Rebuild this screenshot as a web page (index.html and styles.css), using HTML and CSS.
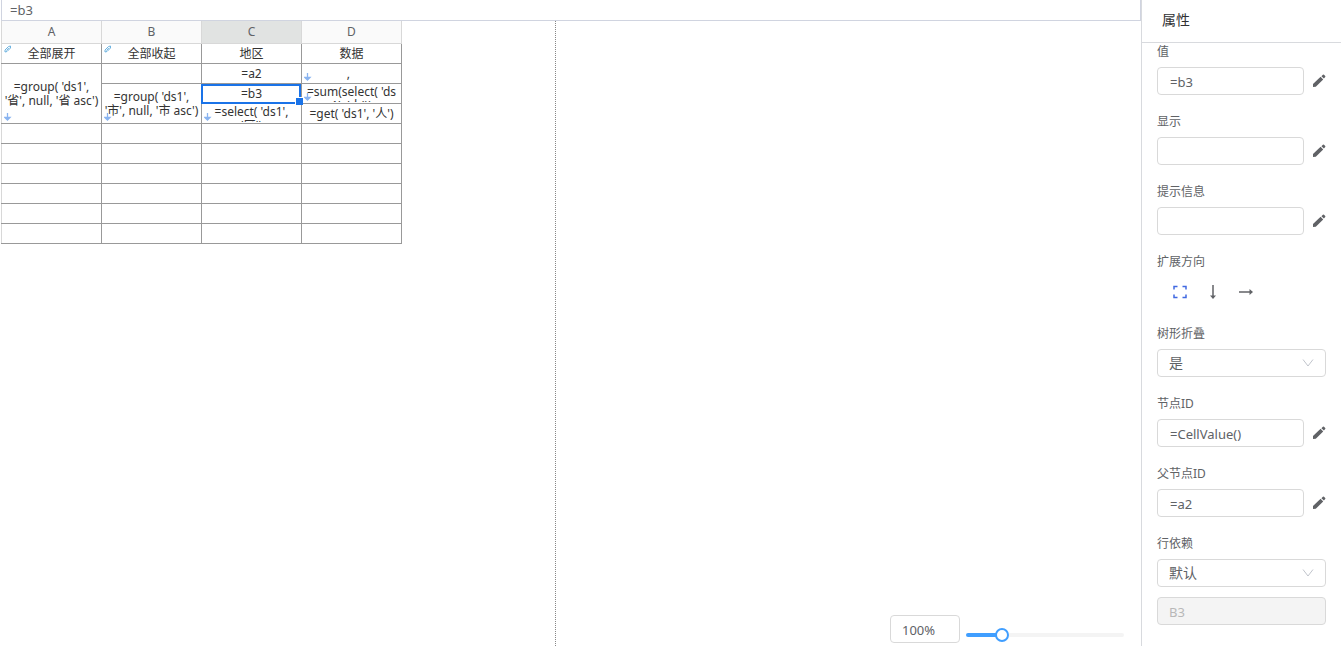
FILE: index.html
```html
<!DOCTYPE html>
<html lang="zh-CN">
<head>
  <meta charset="UTF-8">
  <meta name="viewport" content="width=device-width, initial-scale=1.0">
  <title>报表设计</title>
  <link rel="stylesheet" href="styles.css">
</head>
<body>
  <!-- shared icons -->
  <svg class="sprite" aria-hidden="true">
    <symbol id="pencil" viewBox="0 0 14 14">
      <path d="M1 10 8.600 2.800 11.200 5.400 3.800 12.800 1 13z M9.400 2.200 10.900.8a.8.8 0 0 1 1.100 0l1.200 1.200a.8.8 0 0 1 0 1.100L11.900 4.600z"/>
    </symbol>
    <symbol id="chevron" viewBox="0 0 12 8">
      <path d="M1 .5 6 7 11 .5" fill="none" stroke="currentColor"/>
    </symbol>
    <symbol id="arrow" viewBox="0 0 8 8">
      <path d="M3.500 0v6M1 4.500h5L3.500 7z" fill="currentColor" stroke="currentColor" stroke-width="1.300"/>
    </symbol>
    <symbol id="clip" viewBox="0 0 8 8">
      <path d="M1 5 4.500 1.500 6.500 1 6.500 3 3 6.500 1 7z M2.500 5.500 5 2.800" fill="none" stroke="currentColor"/>
    </symbol>
  </svg>

  <main class="designer">
    <input class="formula" type="text" value="=b3" aria-label="公式">
    <div class="canvas">
      <div class="paper">
        <table class="sheet">
          <thead>
            <tr><th>A</th><th>B</th><th class="active">C</th><th>D</th></tr>
          </thead>
          <tbody>
            <tr>
              <td class="edge"><svg class="mark-top"><use href="#clip"/></svg><div class="cell">全部展开</div></td>
              <td><svg class="mark-top"><use href="#clip"/></svg><div class="cell">全部收起</div></td>
              <td><div class="cell">地区</div></td>
              <td><div class="cell">数据</div></td>
            </tr>
            <tr>
              <td class="edge merged" rowspan="3">=group( 'ds1',<br>'省', null, '省 asc')<svg class="mark"><use href="#arrow"/></svg></td>
              <td></td>
              <td><div class="cell">=a2</div></td>
              <td><div class="cell">,&nbsp;&nbsp;</div><svg class="mark"><use href="#arrow"/></svg></td>
            </tr>
            <tr>
              <td class="merged" rowspan="2">=group( 'ds1',<br>'市', null, '市 asc')<svg class="mark"><use href="#arrow"/></svg></td>
              <td class="selected"><div class="cell">=b3</div></td>
              <td><div class="cell wrap">=sum(select( 'ds<br>1', '人'))</div><svg class="mark"><use href="#arrow"/></svg></td>
            </tr>
            <tr>
              <td><div class="cell wrap">=select( 'ds1',<br>'区')</div><svg class="mark"><use href="#arrow"/></svg></td>
              <td><div class="cell">=get( 'ds1', '人')</div></td>
            </tr>
            <tr><td class="edge"></td><td></td><td></td><td></td></tr>
            <tr><td class="edge"></td><td></td><td></td><td></td></tr>
            <tr><td class="edge"></td><td></td><td></td><td></td></tr>
            <tr><td class="edge"></td><td></td><td></td><td></td></tr>
            <tr><td class="edge"></td><td></td><td></td><td></td></tr>
            <tr><td class="edge"></td><td></td><td></td><td></td></tr>
          </tbody>
        </table>
      </div>
      <div class="zoom">
        <input class="box" type="text" value="100%" aria-label="缩放比例">
        <input class="slider" type="range" min="0" max="100" value="20" aria-label="缩放">
      </div>
    </div>
  </main>

  <aside class="panel">
    <h2>属性</h2>
    <form class="props">
      <div class="field">
        <label for="value">值</label>
        <div class="row">
          <input class="box" id="value" type="text" value="=b3">
          <button type="button" class="edit" aria-label="编辑值"><svg><use href="#pencil"/></svg></button>
        </div>
      </div>
      <div class="field">
        <label for="display">显示</label>
        <div class="row">
          <input class="box" id="display" type="text">
          <button type="button" class="edit" aria-label="编辑显示"><svg><use href="#pencil"/></svg></button>
        </div>
      </div>
      <div class="field">
        <label for="tip">提示信息</label>
        <div class="row">
          <input class="box" id="tip" type="text">
          <button type="button" class="edit" aria-label="编辑提示信息"><svg><use href="#pencil"/></svg></button>
        </div>
      </div>
      <div class="field" role="group" aria-labelledby="direction">
        <span class="label" id="direction">扩展方向</span>
        <div class="directions">
          <button type="button" class="on" aria-label="不扩展">
            <svg viewBox="0 0 14 14"><path d="M1 4.500V1.500h3.500M9.500 1.500H13v3M13 9.500v3H9.500M4.500 12.500H1v-3" fill="none" stroke="currentColor" stroke-width="1.500"/></svg>
          </button>
          <button type="button" aria-label="向下扩展">
            <svg viewBox="0 0 14 14"><path d="M7 0v12" stroke="currentColor" stroke-width="1.500"/><path d="M4 10.500h6L7 14z"/></svg>
          </button>
          <button type="button" aria-label="向右扩展">
            <svg viewBox="0 0 14 14"><path d="M0 7h12" stroke="currentColor" stroke-width="1.500"/><path d="M10.500 4v6L14 7z"/></svg>
          </button>
        </div>
      </div>
      <div class="field">
        <label for="fold">树形折叠</label>
        <div class="select">
          <select class="box" id="fold"><option>是</option><option>否</option></select>
          <svg><use href="#chevron"/></svg>
        </div>
      </div>
      <div class="field">
        <label for="node">节点ID</label>
        <div class="row">
          <input class="box" id="node" type="text" value="=CellValue()">
          <button type="button" class="edit" aria-label="编辑节点ID"><svg><use href="#pencil"/></svg></button>
        </div>
      </div>
      <div class="field">
        <label for="parent">父节点ID</label>
        <div class="row">
          <input class="box" id="parent" type="text" value="=a2">
          <button type="button" class="edit" aria-label="编辑父节点ID"><svg><use href="#pencil"/></svg></button>
        </div>
      </div>
      <div class="field">
        <label for="depend">行依赖</label>
        <div class="select">
          <select class="box" id="depend"><option>默认</option></select>
          <svg><use href="#chevron"/></svg>
        </div>
        <input class="box depend-cell" type="text" value="B3" aria-label="依赖单元格" disabled>
      </div>
    </form>
  </aside>
</body>
</html>
```
FILE: styles.css
```css
* {
  box-sizing: border-box;
}
body {
  margin: 0;
  display: flex;
  height: 100vh;
  overflow: hidden;
  font-family: "Noto Sans", "Noto Sans CJK SC", sans-serif;
  font-size: 12px;
  color: #606266;
  background: #fff;
}
input, select, button {
  font: inherit;
  color: inherit;
}
button {
  padding: 0;
  border: 0;
  background: none;
  cursor: pointer;
}
svg {
  fill: currentColor;
}
.sprite {
  position: absolute;
  width: 0;
  height: 0;
}

/* sheet */
.designer {
  flex: 1;
  min-width: 0;
  display: flex;
  flex-direction: column;
  padding-left: 1px;
}
.formula {
  width: 100%;
  height: 21px;
  padding: 0 8px;
  border: 1px solid #d0d4e0;
  border-top: 0;
  font-size: 13px;
  outline: none;
}
.canvas {
  position: relative;
  flex: 1;
}
.paper {
  width: 555px;
  height: 100%;
  border-right: 1px dotted #888;
}
.sheet {
  width: 401px;
  table-layout: fixed;
  border-collapse: collapse;
  color: #333;
}
.sheet th {
  height: 22px;
  padding: 0;
  border: 1px solid #d8d8d8;
  border-top: 0;
  background: #fafafa;
  color: #606266;
  font-weight: normal;
}
.sheet th.active {
  background: #e1e3e2;
}
.sheet td {
  position: relative;
  height: 20px;
  padding: 0;
  border: 1px solid #999;
  line-height: 14px;
  text-align: center;
  vertical-align: middle;
  white-space: nowrap;
}
.sheet .edge {
  border-left-color: #d8d8d8;
}
.sheet .merged {
  padding-top: 2px;
}
.cell {
  height: 19px;
  line-height: 19px;
  overflow: hidden;
}
.cell.wrap {
  height: 18px;
  padding-top: 1px;
  margin-bottom: 1px;
  line-height: 14px;
}
.mark, .mark-top {
  position: absolute;
  left: 2px;
  width: 8px;
  height: 8px;
  color: #8ab4f0;
}
.mark {
  bottom: 2px;
}
.mark-top {
  top: 1px;
  color: #6db3e0;
}
.selected::before {
  content: "";
  position: absolute;
  inset: 0 0 -1px -1px;
  border: 2px solid #1a73e8;
}
.selected::after {
  content: "";
  position: absolute;
  z-index: 1;
  right: -2px;
  bottom: -2px;
  width: 7px;
  height: 7px;
  border: 1px solid #fff;
  border-width: 1px 0 0 1px;
  background: #1a73e8;
}

/* zoom */
.zoom {
  position: absolute;
  right: 17px;
  bottom: 3px;
  display: flex;
  align-items: center;
  gap: 6px;
}
.zoom .box {
  width: 70px;
}
.slider {
  appearance: none;
  width: 158px;
  height: 4px;
  margin: 12px 0 0;
  border-radius: 2px;
  background: linear-gradient(to right, #409eff 23%, #f4f4f4 23%);
}
.slider::-webkit-slider-thumb {
  appearance: none;
  width: 14px;
  height: 14px;
  border: 2px solid #409eff;
  border-radius: 50%;
  background: #fff;
}

/* properties */
.panel {
  flex: none;
  width: 200px;
  border-left: 1px solid #d8dade;
}
.panel h2 {
  height: 43px;
  margin: 0;
  padding-left: 20px;
  border-bottom: 1px solid #d8dade;
  color: #303133;
  font-size: 14px;
  font-weight: normal;
  line-height: 40px;
}
.props {
  padding: 1px 15px 0;
}
.field {
  margin-bottom: 19px;
}
.field label, .label {
  display: block;
  margin-bottom: 7px;
  line-height: 16px;
}
.box {
  display: block;
  width: 100%;
  height: 28px;
  padding: 1px 11px 0;
  border: 1px solid #d9d9d9;
  border-radius: 4px;
  background: #fff;
  font-size: 13px;
  outline: none;
}
.row {
  display: flex;
  align-items: center;
  gap: 8px;
}
.row .box {
  flex: 1;
  min-width: 0;
  padding-left: 12px;
}
.edit {
  width: 14px;
  height: 14px;
}
.edit svg {
  display: block;
  width: 14px;
  height: 14px;
}
.directions {
  display: flex;
  align-items: center;
  gap: 19px;
  height: 30px;
  padding-left: 16px;
}
.directions button, .directions svg {
  display: block;
  width: 14px;
  height: 14px;
}
.directions .on {
  color: #4169e1;
}
.select {
  position: relative;
}
.select .box {
  appearance: none;
  padding: 0 11px 2px;
  font-size: 14px;
}
.select svg {
  position: absolute;
  top: 10px;
  right: 12px;
  width: 12px;
  height: 8px;
  color: #c0c4cc;
  pointer-events: none;
}
.depend-cell {
  margin-top: 10px;
}
.box:disabled {
  background: #f4f4f4;
  color: #b8b8b8;
}
```
